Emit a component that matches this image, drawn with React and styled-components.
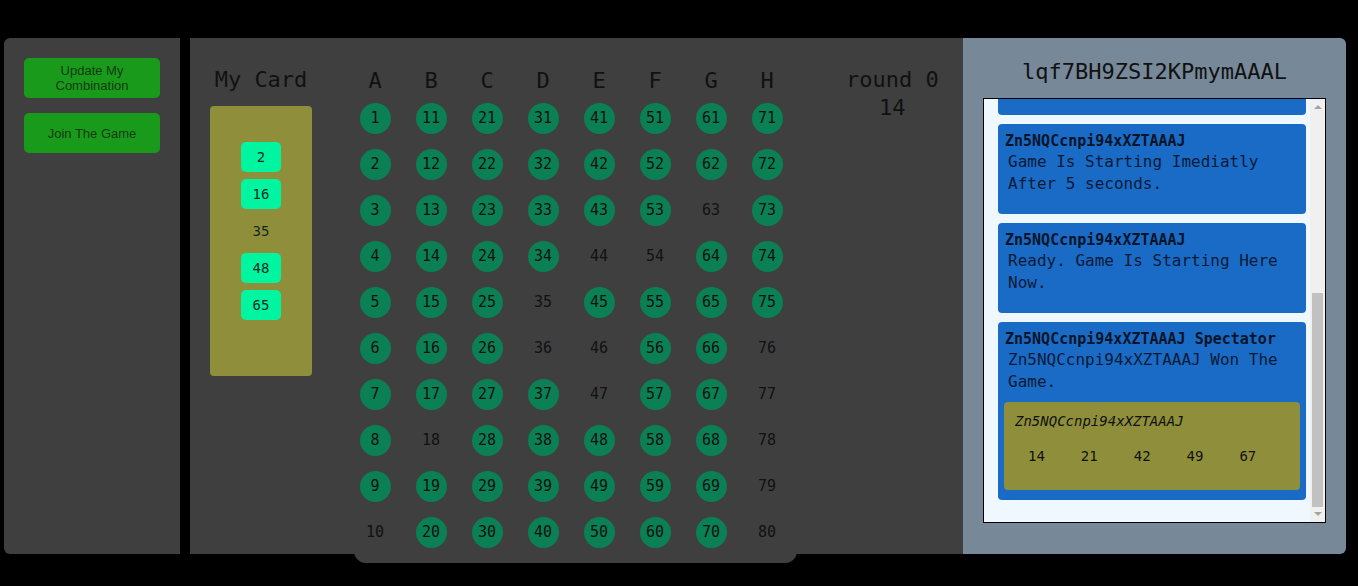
import { useEffect, useRef } from 'react'
import styled, { createGlobalStyle } from 'styled-components'

const GlobalStyle = createGlobalStyle`
    html, body {
        margin: 0;
        padding: 0;
        background: #000;
        font-family: "DejaVu Sans Mono", monospace;
    }
`

const Page = styled.div`
    display: flex;
    padding: 38px 12px 0 4px;
    height: 586px;
    box-sizing: border-box;
    overflow: hidden;
`

const Sidebar = styled.div`
    width: 176px;
    height: 516px;
    background: #3f3f3f;
    border-radius: 6px 0 0 6px;
    padding: 20px;
    box-sizing: border-box;
    display: flex;
    flex-direction: column;
    gap: 15px;
`

const GreenButton = styled.button`
    width: 136px;
    height: 40px;
    border: none;
    border-radius: 5px;
    background: #1a9a1a;
    color: #123a12;
    font-family: "Liberation Sans", Arial, sans-serif;
    font-size: 13px;
    line-height: 15px;
    padding: 0 18px;
`

const Board = styled.div`
    margin-left: 10px;
    width: 773px;
    height: 516px;
    background: #3f3f3f;
    display: flex;
    align-items: flex-start;
`

const CardColumn = styled.div`
    margin-left: 20px;
    width: 102px;
    padding-top: 27px;
`

const Title = styled.div`
    font-size: 22px;
    line-height: 30px;
    color: #111;
    text-align: center;
    white-space: nowrap;
`

const Card = styled.div`
    margin-top: 11px;
    height: 270px;
    box-sizing: border-box;
    padding-top: 36px;
    background: #8f8f3b;
    border-radius: 4px;
    display: flex;
    flex-direction: column;
    align-items: center;
    gap: 7px;
`

const CardNumber = styled.div`
    width: 40px;
    height: 30px;
    border-radius: 5px;
    display: flex;
    align-items: center;
    justify-content: center;
    font-size: 14px;
    color: #112a22;
    background: ${p => (p.$hit ? '#00f5a0' : 'transparent')};
`

const NumberSheet = styled.div`
    margin-left: 42px;
    width: 443px;
    height: 525px;
    box-sizing: border-box;
    padding-top: 27px;
    background: #3f3f3f;
    border-radius: 0 0 12px 12px;
`

const NumberGrid = styled.div`
    margin-left: -7px;
    display: grid;
    grid-template-columns: repeat(8, 56px);
    grid-template-rows: 30px repeat(10, 46px);
    grid-auto-flow: column;
`

const ColumnHead = styled.div`
    display: flex;
    align-items: center;
    justify-content: center;
    font-size: 22px;
    color: #111;
`

const Cell = styled.div`
    display: flex;
    align-items: center;
    justify-content: center;
`

const Ball = styled.div`
    width: 31px;
    height: 31px;
    border-radius: 50%;
    display: flex;
    align-items: center;
    justify-content: center;
    font-size: 15px;
    color: #111;
    background: ${p => (p.$drawn ? '#0a8054' : 'transparent')};
`

const RoundInfo = styled.div`
    margin-left: 49px;
    padding-top: 28px;
    font-size: 22px;
    line-height: 28px;
    color: #111;
    text-align: center;
`

const ChatPanel = styled.div`
    width: 383px;
    height: 516px;
    background: #778899;
    border-radius: 0 6px 6px 0;
    padding: 20px 20px 0;
    box-sizing: border-box;
`

const RoomId = styled.div`
    font-size: 22px;
    line-height: 28px;
    color: #111;
    text-align: center;
    margin-bottom: 12px;
`

const ChatFrame = styled.div`
    position: relative;
    height: 425px;
    box-sizing: border-box;
    border: 1px solid #000;
    background: #f0f8ff;
`

const ChatBox = styled.div`
    height: 100%;
    box-sizing: border-box;
    overflow-y: auto;
    scrollbar-width: none;
    padding: 14px 19px 22px 14px;
    display: flex;
    flex-direction: column;
    gap: 9px;

    &::-webkit-scrollbar {
        display: none;
    }
`

const ScrollTrack = styled.div`
    position: absolute;
    top: 0;
    right: 0;
    bottom: 0;
    width: 15px;
    background: #f0f0f0;
`

const ScrollArrow = styled.div`
    position: absolute;
    left: 4px;
    width: 0;
    height: 0;
    border-left: 4px solid transparent;
    border-right: 4px solid transparent;
    ${p => (p.$down
        ? 'bottom: 6px; border-top: 4px solid #a3a3a3;'
        : 'top: 6px; border-bottom: 4px solid #a3a3a3;')}
`

const ScrollThumb = styled.div`
    position: absolute;
    left: 2px;
    right: 2px;
    top: 194px;
    height: 214px;
    background: #c1c1c1;
`

const Message = styled.div`
    flex-shrink: 0;
    background: #1a6bc5;
    border-radius: 4px;
    padding: 7px 7px ${p => (p.$tight ? '10px' : '19px')};
    color: #0b1a38;
`

const Sender = styled.div`
    font-size: 15px;
    font-weight: bold;
    line-height: 20px;
    color: #081428;
`

const Body = styled.div`
    font-size: 16px;
    line-height: 22px;
    padding-left: 3px;
`

const Winner = styled.div`
    margin: 9px -1px 0 -1px;
    height: 88px;
    box-sizing: border-box;
    background: #8f8f3b;
    border-radius: 4px;
    padding: 11px 11px 0;
    color: #111;
`

const WinnerName = styled.div`
    font-size: 14px;
    font-style: italic;
    line-height: 16px;
`

const WinnerNumbers = styled.div`
    display: flex;
    gap: 36px;
    margin-top: 17px;
    padding-left: 13px;
    font-size: 14px;
    line-height: 20px;
`

const letters = ['A', 'B', 'C', 'D', 'E', 'F', 'G', 'H']
const notDrawn = [10, 18, 35, 36, 44, 46, 47, 54, 63, 76, 77, 78, 79, 80]
const myCard = [
    { n: 2, hit: true },
    { n: 16, hit: true },
    { n: 35, hit: false },
    { n: 48, hit: true },
    { n: 65, hit: true },
]
const player = 'Zn5NQCcnpi94xXZTAAAJ'

export default function App() {
    const chatRef = useRef(null)

    useEffect(() => {
        if (chatRef.current) chatRef.current.scrollTop = chatRef.current.scrollHeight
    }, [])

    return (
        <>
            <GlobalStyle />
            <Page>
                <Sidebar>
                    <GreenButton>Update My Combination</GreenButton>
                    <GreenButton>Join The Game</GreenButton>
                </Sidebar>

                <Board>
                    <CardColumn>
                        <Title>My Card</Title>
                        <Card>
                            {myCard.map(c => (
                                <CardNumber key={c.n} $hit={c.hit}>{c.n}</CardNumber>
                            ))}
                        </Card>
                    </CardColumn>

                    <NumberSheet>
                        <NumberGrid>
                            {letters.map((l, col) => [
                                <ColumnHead key={l}>{l}</ColumnHead>,
                                ...Array.from({ length: 10 }, (_, i) => {
                                    const n = col * 10 + i + 1
                                    return (
                                        <Cell key={n}>
                                            <Ball $drawn={!notDrawn.includes(n)}>{n}</Ball>
                                        </Cell>
                                    )
                                }),
                            ])}
                        </NumberGrid>
                    </NumberSheet>

                    <RoundInfo>
                        round 0
                        <br />
                        14
                    </RoundInfo>
                </Board>

                <ChatPanel>
                    <RoomId>lqf7BH9ZSI2KPmymAAAL</RoomId>
                    <ChatFrame>
                        <ChatBox ref={chatRef}>
                            <Message>
                                <Sender>{player}</Sender>
                                <Body>Joined The Room.</Body>
                            </Message>
                            <Message>
                                <Sender>{player}</Sender>
                                <Body>Updated The Combination.</Body>
                            </Message>
                            <Message>
                                <Sender>{player}</Sender>
                                <Body>Game Is Starting Imediatly After 5 seconds.</Body>
                            </Message>
                            <Message>
                                <Sender>{player}</Sender>
                                <Body>Ready. Game Is Starting Here Now.</Body>
                            </Message>
                            <Message $tight>
                                <Sender>{player} Spectator</Sender>
                                <Body>{player} Won The Game.</Body>
                                <Winner>
                                    <WinnerName>{player}</WinnerName>
                                    <WinnerNumbers>
                                        {[14, 21, 42, 49, 67].map(n => (
                                            <span key={n}>{n}</span>
                                        ))}
                                    </WinnerNumbers>
                                </Winner>
                            </Message>
                        </ChatBox>
                        <ScrollTrack>
                            <ScrollArrow />
                            <ScrollThumb />
                            <ScrollArrow $down />
                        </ScrollTrack>
                    </ChatFrame>
                </ChatPanel>
            </Page>
        </>
    )
}
